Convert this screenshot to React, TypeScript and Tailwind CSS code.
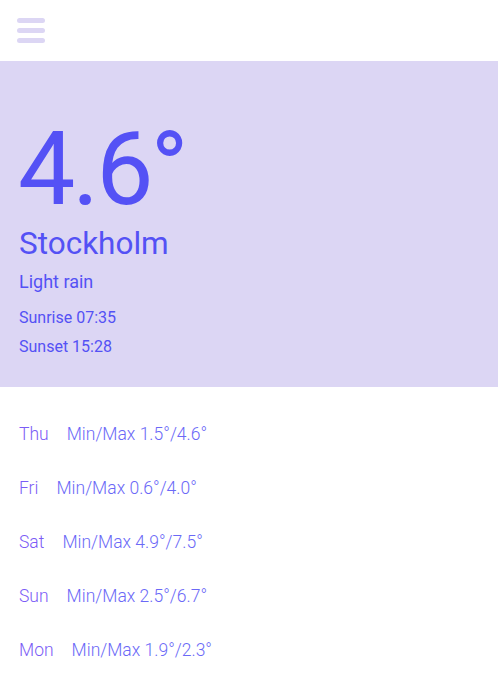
import React from 'react';

type Day = { day: string; min: string; max: string };

const FORECAST: Day[] = [
  { day: 'Thu', min: '1.5', max: '4.6' },
  { day: 'Fri', min: '0.6', max: '4.0' },
  { day: 'Sat', min: '4.9', max: '7.5' },
  { day: 'Sun', min: '2.5', max: '6.7' },
  { day: 'Mon', min: '1.9', max: '2.3' },
];

const MenuIcon = () => (
  <div className="flex flex-col gap-[5px] w-[28px]">
    <span className="block h-[5px] rounded-full bg-[#dcd6f4]" />
    <span className="block h-[5px] rounded-full bg-[#dcd6f4]" />
    <span className="block h-[5px] rounded-full bg-[#dcd6f4]" />
  </div>
);

export default function App() {
  return (
    <div className="min-h-screen bg-white text-[#5451f5]" style={{ fontFamily: 'Roboto, "Liberation Sans", sans-serif' }}>
      {/* header */}
      <header className="h-[61px] px-[17px] pt-[18px]">
        <MenuIcon />
      </header>

      {/* current weather */}
      <section className="bg-[#dcd6f4] px-[19px] pt-[65px] pb-[32px]">
        <p className="text-[102px] leading-[0.85] tracking-[-3px] -ml-[1px]">4.6°</p>
        <h1 className="text-[31.5px] leading-none mt-[15px]">Stockholm</h1>
        <p className="text-[18px] leading-none mt-[14px]">Light rain</p>
        <p className="text-[16px] leading-none mt-[18.5px]">Sunrise 07:35</p>
        <p className="text-[16px] leading-none mt-[13px]">Sunset 15:28</p>
      </section>

      {/* forecast */}
      <ul className="px-[19px] pt-[39px] flex flex-col gap-[36.5px] font-light">
        {FORECAST.map((d) => (
          <li key={d.day} className="text-[17.5px] leading-none flex">
            <span className="text-[#7b5cf6] mr-[18px]">{d.day}</span>
            <span className="text-[#6b69f7]">Min/Max {d.min}°/{d.max}°</span>
          </li>
        ))}
      </ul>
    </div>
  );
}
